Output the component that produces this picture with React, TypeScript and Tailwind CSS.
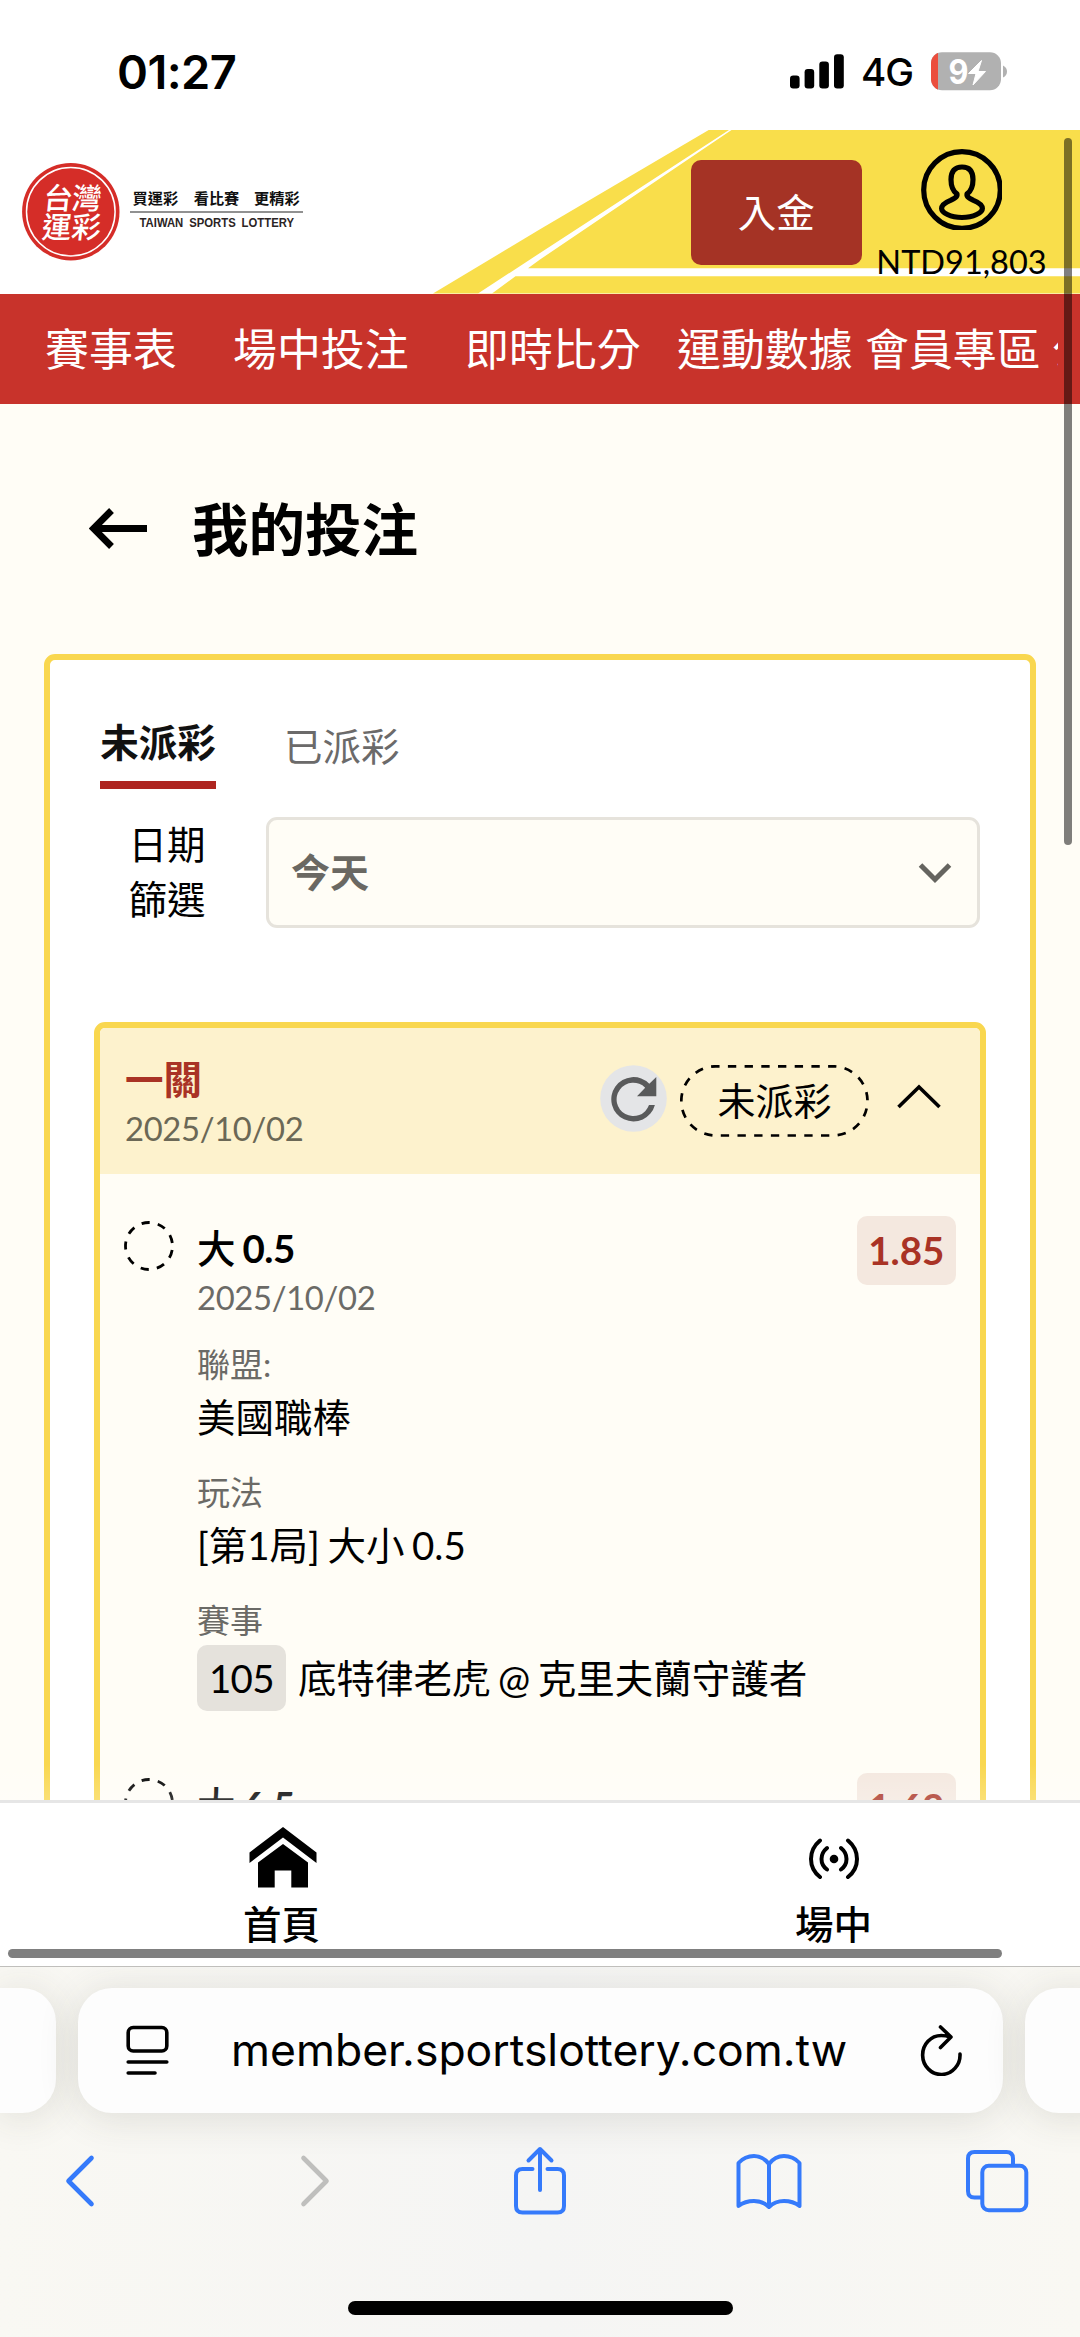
import React from "react";

const SANS = "font-[Lato,'Noto_Sans_CJK_TC',sans-serif]";
const UI = "font-[Inter,'Noto_Sans_CJK_TC',sans-serif]";

function StatusBar() {
  return (
    <div className="flex h-[130px] shrink-0 items-start justify-between bg-white pr-[72px] pl-[117px]">
      <div className="mt-[43px] font-[Inter,sans-serif] text-[47px] leading-[57px] font-semibold tracking-[-0.6px] text-black">01:27</div>
      <div className="mt-[52px] flex h-[39px] items-center">
        <svg width="54" height="35" viewBox="0 0 54 35" className="mr-[17px]">
          <rect x="0" y="21.5" width="9.6" height="13" rx="3.2" />
          <rect x="14.6" y="15" width="9.6" height="19.5" rx="3.2" />
          <rect x="29.3" y="7.5" width="9.6" height="27" rx="3.2" />
          <rect x="44" y="0.3" width="9.8" height="34.2" rx="3.2" />
        </svg>
        <div className="w-[70px] font-[Inter,sans-serif] text-[38.500px] leading-[40px] font-medium tracking-[-1px] text-black">4G</div>
        <svg width="77" height="39" viewBox="0 0 77 39">
          <defs>
            <clipPath id="battery">
              <rect x="0" y="0.3" width="70" height="38" rx="11" />
            </clipPath>
          </defs>
          <g clipPath="url(#battery)">
            <rect width="70" height="39" fill="#b1b1b1" />
            <rect width="7" height="39" fill="#eb4e3d" />
          </g>
          <path d="M72 13.5q4 2 4 6t-4 6z" fill="#b1b1b1" />
          <text x="17.500" y="32" fontFamily="Inter, sans-serif" fontWeight="700" fontSize="34" fill="#fff" textLength="20" lengthAdjust="spacingAndGlyphs">9</text>
          <path d="M50.500 8.500L37.500 21.500h7.500l-3 11.500L54.500 19.500h-7.500z" fill="#fff" stroke="#fff" strokeWidth="1" strokeLinejoin="round" />
        </svg>
      </div>
    </div>
  );
}

function Logo() {
  return (
    <svg width="310" height="163" viewBox="0 130 310 163">
      <circle cx="70.800" cy="211.700" r="48.700" fill="#d52d28" />
      <circle cx="70.800" cy="211.700" r="44.300" fill="none" stroke="#fff" strokeWidth="1.500" />
      <g fill="#fff" fontFamily="'Noto Sans CJK TC', sans-serif" fontWeight="500" fontSize="29.500">
        <text transform="translate(42.500 208.500) skewX(-6)" textLength="58">台灣</text>
        <text transform="translate(41 237.500) skewX(-6)" textLength="59">運彩</text>
      </g>
      <g fill="#111" fontFamily="'Noto Sans CJK TC', sans-serif" fontWeight="700" fontSize="15.200">
        <text x="132.500" y="204">買運彩</text>
        <text x="193.700" y="204">看比賽</text>
        <text x="254" y="204">更精彩</text>
      </g>
      <rect x="130" y="211.200" width="173" height="1.600" fill="#777" />
      <text x="139.500" y="227.300" fontFamily="'Liberation Sans', sans-serif" fontWeight="700" fontSize="12.400" fill="#2b2424" wordSpacing="3" textLength="154.500" lengthAdjust="spacingAndGlyphs">TAIWAN SPORTS LOTTERY</text>
    </svg>
  );
}

function Header() {
  return (
    <div className="relative flex h-[163.500px] shrink-0 bg-white">
      <svg className="absolute inset-0" width="1080" height="163.500" viewBox="0 130 1080 163.500">
        <path d="M433 293.500L540 229.300L708.700 130H1080V293.500z" fill="#f9de4b" />
        <path d="M478 293.500L540 253L729 130H731.500L540 259.500L528 268.300H1080V276.300H515.500L492 293.500z" fill="#fff" />
      </svg>
      <div className="relative flex w-full items-start">
        <Logo />
        <button className={`mt-[29.700px] ml-[380.500px] h-[105.500px] w-[171.500px] shrink-0 rounded-[10px] bg-[#a53325] text-[38.500px] leading-[104px] font-normal text-white ${SANS}`}>入金</button>
        <div className="ml-[11px] flex w-[177px] flex-col items-center pt-[18px]">
          <svg width="80.500" height="81.500" viewBox="0 0 80.500 81.500" fill="none" stroke="#000" strokeWidth="5.200" className="overflow-hidden">
            <circle cx="41" cy="42" r="38.300" />
            <path d="M36 46c.6 3-2.500 4.500-6.500 6.300C24 54.500 20.600 56.500 20.600 60.500c0 4 8.700 9 20.400 9S61.400 64.500 61.400 60.500c0-4-3.400-6-8.900-8.200C48.500 50.500 45.400 49 46 46c5-3.500 6-8 6-14.500C52 23 48 19 41 19S30 23 30 31.500c0 6.500 1 11 6 14.500z" strokeLinejoin="round" />
          </svg>
          <div className={`mt-[12.500px] text-[32.500px] leading-[40px] whitespace-nowrap text-black ${SANS}`}>NTD91,803</div>
        </div>
      </div>
    </div>
  );
}

function NavBar() {
  return (
    <nav className={`flex h-[110.500px] shrink-0 items-center bg-[#c8332b] text-[43.900px] leading-[60px] font-normal whitespace-nowrap text-white ${SANS}`}>
      <div className="flex w-[1058px] overflow-hidden pl-[45px]">
        <span className="w-[188px] shrink-0">賽事表</span>
        <span className="w-[232px] shrink-0">場中投注</span>
        <span className="w-[212px] shrink-0">即時比分</span>
        <span className="w-[188px] shrink-0">運動數據</span>
        <span className="w-[187px] shrink-0">會員專區</span>
        <span className="shrink-0">公告</span>
      </div>
    </nav>
  );
}

function DashedCircle() {
  return (
    <svg width="50" height="50" viewBox="0 0 50 50" className="mt-[-4px] shrink-0">
      <circle cx="25" cy="25" r="23.500" fill="none" stroke="#000" strokeWidth="2.800" strokeDasharray="8.200 8.207" strokeDashoffset="-4.100" />
    </svg>
  );
}

type Detail = { league: string; market: string; code: string; match: string };
type Bet = { side: string; line: string; date: string; odds: string; detail?: Detail };

const bets: Bet[] = [
  {
    side: "大",
    line: "0.5",
    date: "2025/10/02",
    odds: "1.85",
    detail: { league: "美國職棒", market: "[第1局] 大小 0.5", code: "105", match: "底特律老虎 @ 克里夫蘭守護者" },
  },
  { side: "大", line: "6.5", date: "2025/10/02", odds: "1.62" },
];

function Label({ children }: { children: React.ReactNode }) {
  return <div className="h-[46px] text-[33px] leading-[46px] text-[#6b6a66]">{children}</div>;
}

function BetItem({ bet }: { bet: Bet }) {
  return (
    <div className="flex h-[557px] items-start pt-[50.500px] pr-[24.500px] pl-[24px]">
      <DashedCircle />
      <div className="mt-[-1px] ml-[23px] flex-1 text-[38.500px] whitespace-nowrap text-black">
        <div className="flex h-[49px] gap-[7px] leading-[49px]">
          <span className="font-medium">{bet.side}</span>
          <span className="font-bold tracking-[-0.5px]">{bet.line}</span>
        </div>
        <div className="h-[49px] text-[32.800px] leading-[49px] tracking-[-0.35px] text-[#6b6a66]">{bet.date}</div>
        {bet.detail && (
          <>
            <div className="h-[19px]" />
            <Label>聯盟:</Label>
            <div className="h-[82px] leading-[61px]">{bet.detail.league}</div>
            <Label>玩法</Label>
            <div className="h-[82px] leading-[61px] [word-spacing:-2.300px]">{bet.detail.market}</div>
            <Label>賽事</Label>
            <div className="mt-[2.500px] flex h-[66px] items-center leading-[66px]">
              <span className="flex h-[66px] w-[89px] items-center justify-center rounded-[10px] bg-[#e5e2dc] tracking-[-0.6px]">{bet.detail.code}</span>
              <span className="ml-[12px] [word-spacing:-2.300px]">{bet.detail.match}</span>
            </div>
          </>
        )}
      </div>
      <div className="mt-[-9px] flex h-[69.500px] w-[98.500px] items-center justify-center rounded-[10px] bg-[#f4e8df] pt-[2px] text-[38.500px] font-bold text-[#a93325]">{bet.odds}</div>
    </div>
  );
}

function BetCard() {
  return (
    <div className="mx-[44px] mt-[94px] rounded-[11px] border-[6px] border-[#f9d74f] bg-[#fffdf6]">
      <div className="flex h-[146.500px] items-start rounded-t-[5px] bg-[#fdf2cd] pr-[39px] pl-[25px]">
        <div className="mt-[27px] flex-1">
          <div className="text-[38.500px] leading-[49px] font-bold text-[#a93325]">一關</div>
          <div className="text-[32.800px] leading-[49px] tracking-[-0.35px] text-[#6b6856]">2025/10/02</div>
        </div>
        <svg width="67" height="67" viewBox="0 0 67 67" className="mt-[37px]">
          <circle cx="33.500" cy="33.500" r="33.300" fill="#e4e5e7" />
          <path d="M49.300 18.700A22.200 22.200 0 1 0 54.900 40.100H49A16.700 16.700 0 1 1 45.200 22.700L37 31.200H56.300V11.900z" fill="#595a5b" />
        </svg>
        <div className="relative mt-[37px] ml-[13px] flex h-[72px] w-[189px] items-center justify-center text-[38px] leading-[72px] text-black">
          <svg className="absolute inset-0" width="189" height="72" viewBox="0 0 189 72">
            <rect x="1.300" y="1.300" width="186.200" height="69.200" rx="34.600" fill="none" stroke="#000" strokeWidth="2.700" strokeDasharray="8.350 8.350" strokeDashoffset="4.700" />
          </svg>
          <span className="-mt-[2px]">未派彩</span>
        </div>
        <svg width="44" height="26" viewBox="0 0 44 26" className="mt-[56px] ml-[28px]" fill="none" stroke="#000" strokeWidth="3.600">
          <path d="M1.500 23L22 3L42.500 23" />
        </svg>
      </div>
      {bets.map((b) => (
        <BetItem key={b.line} bet={b} />
      ))}
    </div>
  );
}

function Main() {
  return (
    <main className={`relative h-[1396px] shrink-0 overflow-hidden bg-[#fffdf6] px-[44px] ${SANS}`}>
      <div className="flex h-[249.500px] items-center pl-[45px]">
        <svg width="59" height="41" viewBox="0 0 59 41" fill="none" stroke="#000" strokeWidth="6.800">
          <path d="M58 20.500H4M22.500 2.500L4.500 20.500L22.500 38.500" />
        </svg>
        <h1 className="ml-[44px] text-[56.500px] leading-[80px] font-bold text-black">我的投注</h1>
      </div>
      <div className="rounded-[11px] border-[6px] border-[#f9d74f] bg-white">
        <div className="flex items-start pt-[54px] pl-[50px] text-[38.500px]">
          <div className="h-[75.500px] w-[116px] border-b-[8.500px] border-[#ae2520] text-center leading-[56px] font-bold text-[#111]">未派彩</div>
          <div className="ml-[68px] leading-[65px] text-[#6b6a6a]">已派彩</div>
        </div>
        <div className="mt-[28px] flex h-[110.500px] items-center pl-[50px]">
          <div className="w-[134px] text-center text-[38.500px] leading-[55.700px] text-black">日期<br />篩選</div>
          <div className="ml-[32px] flex h-[110.500px] w-[714px] items-center rounded-[11px] border-[3px] border-[#e6e3dc] bg-[#fffdf6] pr-[25px] pl-[22px]">
            <span className="flex-1 text-[39px] leading-[60px] font-bold text-[#6a6862]">今天</span>
            <svg width="34" height="22" viewBox="0 0 34 22" className="mt-[2px]" fill="none" stroke="#65645f" strokeWidth="5">
              <path d="M2.500 3L17 17.500L31.500 3" />
            </svg>
          </div>
        </div>
        <BetCard />
      </div>
      <div className="absolute inset-x-0 bottom-0 h-[36px] bg-linear-to-b from-white/0 to-white/22" />
    </main>
  );
}

function BottomNav() {
  return (
    <div className={`relative flex h-[166px] shrink-0 overflow-hidden border-t-[3px] border-[#e6e6e6] bg-white text-[38.500px] leading-[44px] font-medium text-black ${SANS}`}>
      <div className="flex w-[563px] shrink-0 flex-col items-center">
        <svg width="68" height="61" viewBox="0 0 68 61" className="mt-[23.500px] ml-[2px]">
          <path d="M34 0L67.500 25.500V36L34 10.500L0.500 36V25.500z" />
          <path d="M34 17L59 35.500V60.500H42.300V43.500H25.700V60.500H9V35.500z" />
        </svg>
        <span className="mt-[14px]">首頁</span>
      </div>
      <div className="flex w-[541px] shrink-0 flex-col items-center">
        <svg width="52" height="42" viewBox="0 0 52 42" className="mt-[34.500px]" fill="none" stroke="#000" strokeWidth="4" strokeLinecap="round">
          <circle cx="26" cy="21" r="4.300" fill="#000" stroke="none" />
          <path d="M12 2.500Q3 10 3 21T12 39M40 2.500Q49 10 49 21T40 39M19 10Q13.500 14.500 13.500 21T19 31.500M33 10Q38.500 14.500 38.500 21T33 31.500" />
        </svg>
        <span className="mt-[22px]">場中</span>
      </div>
      <div className="absolute bottom-[8.500px] left-[8px] h-[8.500px] w-[994px] rounded-full bg-[#7f7f7f]" />
    </div>
  );
}

function BrowserBar() {
  return (
    <div className={`flex h-[371px] shrink-0 flex-col overflow-hidden border-t border-[#c0bfbc] bg-linear-to-r from-[#f9f8f3] via-[#f5f5f4] to-[#f9f8f3] ${UI}`}>
      <div className="mt-[21px] flex h-[124.500px] shrink-0 gap-[22.500px]">
        <div className="w-[55.500px] shrink-0 rounded-r-[34px] bg-[#fdfdfd] shadow-[0_4px_40px_rgba(60,60,40,0.14)]" />
        <div className="flex w-[924.500px] shrink-0 items-center rounded-[34px] bg-[#fdfdfd] pl-[48px] shadow-[0_4px_40px_rgba(60,60,40,0.14)]">
          <svg width="43" height="50" viewBox="0 0 43 50" fill="none" stroke="#000" strokeWidth="3.600" strokeLinecap="round">
            <rect x="2.200" y="2.500" width="38.600" height="23.500" rx="5" />
            <path d="M2.200 37H40.800M2.200 48H29" />
          </svg>
          <div className="ml-[62px] w-[622px] text-[44.500px] leading-[60px] whitespace-nowrap text-black">member.sportslottery.com.tw</div>
          <svg width="43" height="52" viewBox="0 0 43 52" className="ml-[67px]" fill="none" stroke="#000" strokeWidth="3.600" strokeLinecap="round" strokeLinejoin="round">
            <path d="M40 30A18.700 19.500 0 1 1 21.300 11.500Q26 11.500 30 13M20.500 3L31 13L20.500 23.500" />
          </svg>
        </div>
        <div className="w-[80px] shrink-0 rounded-l-[34px] bg-[#fdfdfd] shadow-[0_4px_40px_rgba(60,60,40,0.14)]" />
      </div>
      <div className="mt-[32px] flex h-[72px] shrink-0 items-center pl-[64px]">
        <svg width="32" height="54" viewBox="0 0 32 54" fill="none" stroke="#357afb" strokeWidth="4.600" strokeLinecap="round" strokeLinejoin="round">
          <path d="M27.500 4L4.500 27L27.500 50" />
        </svg>
        <svg width="32" height="54" viewBox="0 0 32 54" className="ml-[203px]" fill="none" stroke="#bfbfbd" strokeWidth="4.600" strokeLinecap="round" strokeLinejoin="round">
          <path d="M4.500 4L27.500 27L4.500 50" />
        </svg>
        <svg width="54" height="70" viewBox="0 0 54 70" className="ml-[182px]" fill="none" stroke="#357afb" strokeWidth="4" strokeLinecap="round" strokeLinejoin="round">
          <path d="M19.500 23H9.500Q3 23 3 29.500V60Q3 66.500 9.500 66.500H44.500Q51 66.500 51 60V29.500Q51 23 44.500 23H34.500M27 44V3M15.500 14.500L27 3L38.500 14.500" />
        </svg>
        <svg width="68" height="58" viewBox="0 0 68 58" className="ml-[168px]" fill="none" stroke="#357afb" strokeWidth="4" strokeLinecap="round" strokeLinejoin="round">
          <path d="M34 12Q28 4 19 4Q10 4 3.500 11V54Q10 49 19 49Q28 49 34 55Q40 49 49 49Q58 49 64.500 54V11Q58 4 49 4Q40 4 34 12V55" />
        </svg>
        <svg width="64" height="64" viewBox="0 0 64 64" className="ml-[162px]" fill="none" stroke="#357afb" strokeWidth="4">
          <path d="M17 48.500H9.500Q3 48.500 3 42V9.500Q3 3 9.500 3H41.500Q48 3 48 9.500V16" />
          <rect x="17.300" y="16.800" width="44" height="44.500" rx="6.500" />
        </svg>
      </div>
      <div className="mt-[84.500px] ml-[348px] h-[14px] w-[385px] shrink-0 rounded-full bg-black" />
    </div>
  );
}

export default function App() {
  return (
    <div className="relative flex h-[2337px] w-[1080px] flex-col overflow-hidden bg-white">
      <StatusBar />
      <Header />
      <NavBar />
      <Main />
      <BottomNav />
      <BrowserBar />
      <div className="absolute top-[138px] left-[1063.500px] h-[707px] w-[8.500px] rounded-full bg-black/50" />
    </div>
  );
}
